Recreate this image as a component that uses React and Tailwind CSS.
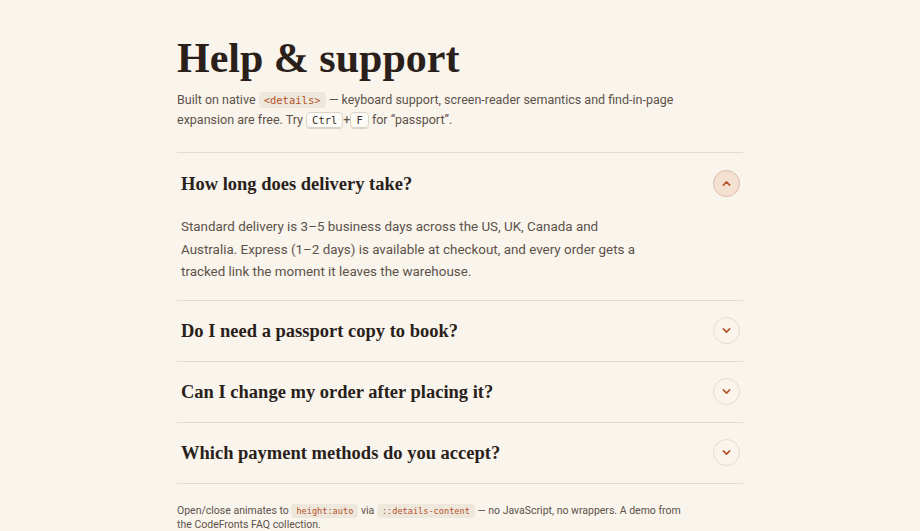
import React from 'react';

const faqs = [
  {
    q: 'How long does delivery take?',
    a: 'Standard delivery is 3–5 business days across the US, UK, Canada and Australia. Express (1–2 days) is available at checkout, and every order gets a tracked link the moment it leaves the warehouse.',
    open: true,
  },
  { q: 'Do I need a passport copy to book?', a: 'Only for international bookings where the carrier requires ID at customs.' },
  { q: 'Can I change my order after placing it?', a: 'Yes — until it ships you can edit items and address from your account page.' },
  { q: 'Which payment methods do you accept?', a: 'All major cards, PayPal, Apple Pay and Google Pay.' },
];

function Code({ children, small }) {
  return (
    <code
      className={
        small
          ? "rounded-[4px] bg-[#eee7dc] px-[5px] py-[2px] text-[8.6px] text-[#b4522a] [font-family:'DejaVu_Sans_Mono',monospace]"
          : "rounded-[4px] bg-[#eee7dc] px-[5px] py-[2px] text-[10.5px] text-[#b4522a] [font-family:'DejaVu_Sans_Mono',monospace]"
      }
    >
      {children}
    </code>
  );
}

function Kbd({ children }) {
  return (
    <kbd className="rounded-[4px] border border-[#dcd3c6] bg-[#fdfbf7] px-[5px] py-[1px] text-[10.5px] text-[#3a302a] shadow-[0_1px_0_#dcd3c6] [font-family:'DejaVu_Sans_Mono',monospace]">
      {children}
    </kbd>
  );
}

function Chevron({ up }) {
  return (
    <svg viewBox="0 0 24 24" className="h-[15px] w-[15px]" fill="none" stroke="currentColor" strokeWidth="2.6" strokeLinecap="round" strokeLinejoin="round">
      {up ? <path d="M7 14.5l5-5 5 5" /> : <path d="M7 9.5l5 5 5-5" />}
    </svg>
  );
}

function Item({ q, a, open }) {
  return (
    <details open={open} className="group border-b border-[#e4dccf]">
      <summary className="flex h-[60px] cursor-pointer list-none items-center justify-between pl-1 pr-[3px] [&::-webkit-details-marker]:hidden">
        <span className="pt-[3px] text-[18.5px] font-bold text-[#2a1f1a] [font-family:'Liberation_Serif',Georgia,serif]">{q}</span>
        <span className="flex h-[27px] w-[27px] items-center justify-center rounded-full border border-[#e4dccf] text-[#b4522a] group-open:border-[#dcbba5] group-open:bg-[#f4e1d2]">
          <span className="hidden group-open:block"><Chevron up /></span>
          <span className="block group-open:hidden"><Chevron /></span>
        </span>
      </summary>
      <p className="max-w-[460px] pb-[16px] pl-1 pt-[3px] text-[13.4px] leading-[22.5px] text-[#5d524a]">{a}</p>
    </details>
  );
}

export default function App() {
  return (
    <div className="min-h-screen bg-[#f9f4ec] [font-family:Roboto,'Noto_Sans',sans-serif]">
      <div className="mx-auto w-[566px] pt-[34px]">
        <h1 className="text-[42px] font-bold leading-[48px] text-[#2a1f1a] [font-family:'Liberation_Serif',Georgia,serif]">
          Help &amp; support
        </h1>
        <p className="mt-[8px] max-w-[505px] text-[12.5px] leading-[20px] text-[#5d524a]">
          Built on native <Code>&lt;details&gt;</Code> — keyboard support, screen-reader semantics and find-in-page
          expansion are free. Try <Kbd>Ctrl</Kbd>+<Kbd>F</Kbd> for “passport”.
        </p>
        <div className="mt-[22px] border-t border-[#e4dccf]">
          {faqs.map((f) => (
            <Item key={f.q} {...f} />
          ))}
        </div>
        <p className="mt-[20px] max-w-[510px] text-[10.5px] leading-[13.5px] text-[#5d524a]">
          Open/close animates to <Code small>height:auto</Code> via <Code small>::details-content</Code> — no JavaScript, no wrappers. A demo from the CodeFronts FAQ collection.
        </p>
      </div>
    </div>
  );
}
